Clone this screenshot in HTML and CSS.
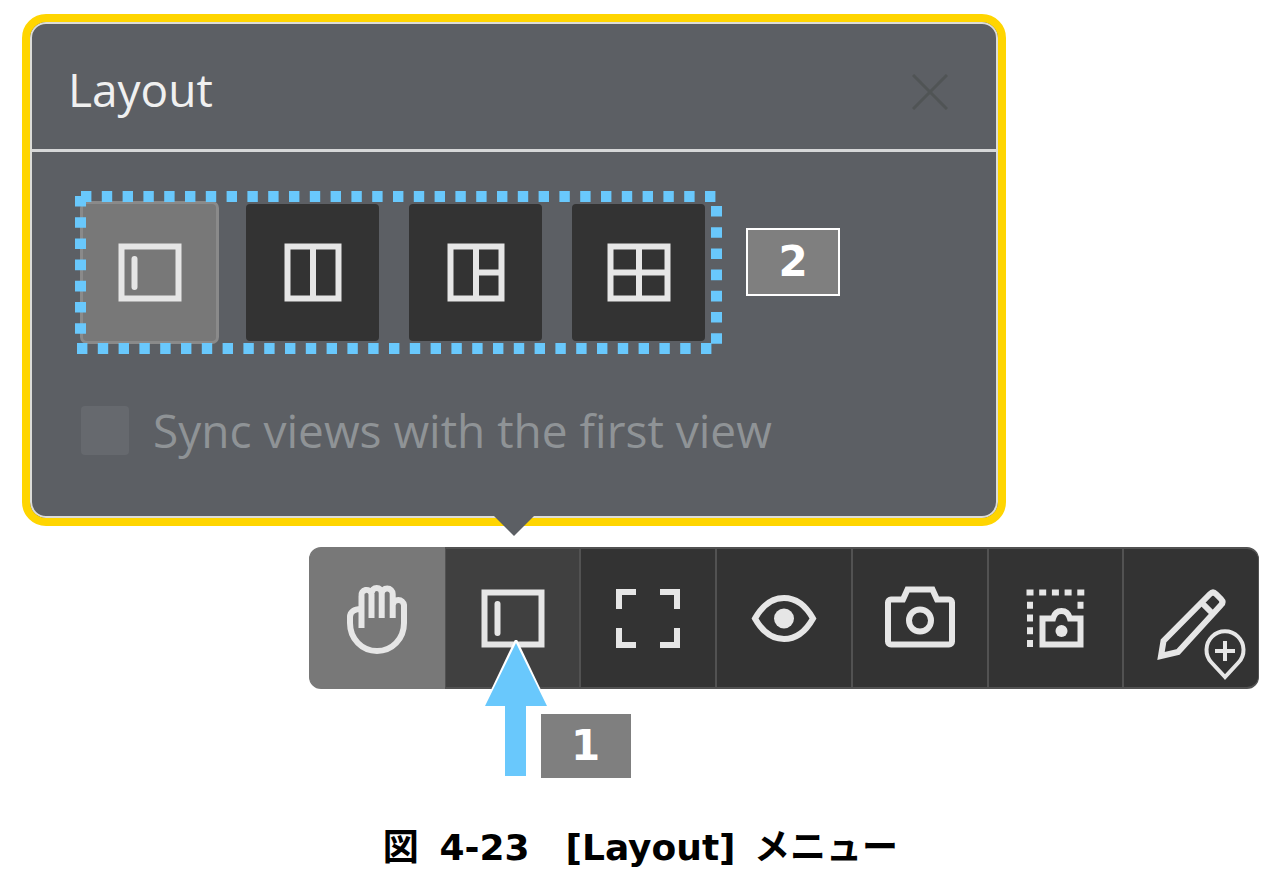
FILE: index.html
```html
<!DOCTYPE html>
<html lang="ja">
<head>
    <meta charset="UTF-8">
    <meta name="viewport" content="width=device-width, initial-scale=1.0">
    <title>[Layout] メニュー</title>
    <link rel="stylesheet" href="styles.css">
</head>
<body>
<figure class="figure">
    <section class="panel">
        <header class="panel-header">
            <h2 class="panel-title">Layout</h2>
            <button class="close" type="button" aria-label="Close">
                <svg width="36" height="36" viewBox="0 0 36 36"><path d="M1 1L35 35M35 1L1 35"/></svg>
            </button>
        </header>
        <div class="panel-body">
            <div class="layout-row">
                <div class="layouts">
                    <button class="tile active" type="button" aria-label="Single view">
                        <svg class="icon" viewBox="-60 -60 120 120"><path d="M-28.5 -26.5H28.5V25.5H-28.5Z"/><path class="bar" d="M-15.5 -14V14"/></svg>
                    </button>
                    <button class="tile" type="button" aria-label="Two views">
                        <svg class="icon" viewBox="-60 -60 120 120"><path d="M-25.5 -26.5H25.5V25.5H-25.5ZM0 -26V25"/></svg>
                    </button>
                    <button class="tile" type="button" aria-label="Three views">
                        <svg class="icon" viewBox="-60 -60 120 120"><path d="M-25.5 -26.5H25.5V25.5H-25.5ZM0 -26V25M0 -.5H25"/></svg>
                    </button>
                    <button class="tile" type="button" aria-label="Four views">
                        <svg class="icon" viewBox="-60 -60 120 120"><path d="M-28.5 -26.5H28.5V25.5H-28.5ZM0 -26V25M-28 -.5H28"/></svg>
                    </button>
                    <!-- dotted frame -->
                    <svg class="dots" width="647" height="163" viewBox="0 0 647 163">
                        <path stroke-dasharray="10.4 10.4" d="M6 5.5H641"/>
                        <path stroke-dasharray="10.4 10.4" d="M2 157.5H637"/>
                        <path stroke-dasharray="10.6 10.6" d="M5.5 5V153M641.5 15V153"/>
                    </svg>
                </div>
                <span class="callout outlined">2</span>
            </div>
            <label class="sync">
                <input type="checkbox" disabled>
                <span>Sync views with the first view</span>
            </label>
        </div>
    </section>

    <ul class="toolbar">
        <li>
            <button class="tool active" type="button" aria-label="Pan">
                <svg class="icon" viewBox="-60 -60 120 120"><path d="M-15.5 10V-22a5 5 0 0 1 10-2V0M-5.3 -25a5 5 0 0 1 10 0V0M4.7 -24a5.5 5.5 0 0 1 11 0V0M15.7 -13a5.7 5.7 0 0 1 11.3 0V5C27 21 15 33 0 33S-27 21-27 5V-1c0-5 4-8 11-8"/></svg>
            </button>
        </li>
        <li>
            <button class="tool open" type="button" aria-label="Layout">
                <svg class="icon" viewBox="-60 -60 120 120"><path d="M-28.5 -25.5H28.5V26.5H-28.5Z"/><path class="bar" d="M-15.5 -14V15"/></svg>
            </button>
            <div class="marker">
                <svg class="arrow" width="62" height="136" viewBox="0 0 62 136"><path class="edge" d="M0 66L31 1L62 66"/><path d="M31 3L62 66H41V136H20V66H0Z"/></svg>
                <span class="callout">1</span>
            </div>
        </li>
        <li>
            <button class="tool" type="button" aria-label="Fullscreen">
                <svg class="icon" viewBox="-60 -60 120 120"><path d="M-29 -9V-26H-12M12 -26H29V-9M29 10V27H12M-12 27H-29V10"/></svg>
            </button>
        </li>
        <li>
            <button class="tool" type="button" aria-label="Visibility">
                <svg class="icon" viewBox="-60 -60 120 120"><path d="M-29 .5C-22-12-12-20 0-20S22-12 29 .5C22 13 12 21 0 21S-22 13-29 .5Z"/><circle class="fill" cy=".5" r="10"/></svg>
            </button>
        </li>
        <li>
            <button class="tool" type="button" aria-label="Snapshot">
                <svg class="icon" viewBox="-60 -60 120 120"><path d="M-29 -18.5H-17L-12.5 -28.5H12.5L17 -18.5H29a3 3 0 0 1 3 3V23.5a3 3 0 0 1-3 3H-29a3 3 0 0 1-3-3V-15.5a3 3 0 0 1 3-3Z"/><circle cy="2.5" r="11"/></svg>
            </button>
        </li>
        <li>
            <button class="tool" type="button" aria-label="Snapshot of region">
                <svg class="icon" viewBox="-60 -60 120 120"><path stroke-dasharray="7 5.7" d="M-28.5 -25.5H30M-25 -16.2V30M25.5 -16.2V-9"/><path d="M-12.5 .5H-2Q0 -7 6.5 -7T15 .5H25.5V26.5H-12.5Z"/><circle class="fill" cx="6.5" cy="13" r="6"/></svg>
            </button>
        </li>
        <li>
            <button class="tool" type="button" aria-label="Add note">
                <svg class="icon" viewBox="-60 -60 120 120"><path d="M-30 38L-27.5 23L19 -24Q22 -27 25 -24L30 -19Q33 -16 30 -13L-13 34ZM11 -15L22 -4"/><path class="thin" d="M34 59L20.5 44.5A18.5 18.5 0 1 1 47.5 44.5ZM34 23V43M24 33H44"/></svg>
            </button>
        </li>
    </ul>

    <figcaption><span class="label">図</span> 4-23　[Layout] <span class="word">メニュー</span></figcaption>
</figure>
</body>
</html>
```
FILE: styles.css
```css
body {
    margin: 0;
    background-color: #fff;
    font-family: "Open Sans", "Noto Sans CJK JP", sans-serif;
}

.figure {
    display: grid;
    grid-template-columns: 287px 1fr 253px;
    row-gap: 21px;
    margin: 0;
    padding: 14px 19px 0 22px;
}

button {
    padding: 0;
    border: none;
    cursor: pointer;
}

/* panel */

.panel {
    grid-column: 1 / 3;
    position: relative;
    padding: 2px;
    background-color: #5c5f64;
    border: 8px solid #ffd500;
    border-radius: 24px;
    box-shadow: inset 0 0 0 2px #dcdcd8;
}

.panel::after {
    content: "";
    position: absolute;
    left: 464px;
    bottom: -18px;
    width: 40px;
    height: 20px;
    background-color: #5c5f64;
    clip-path: polygon(0 0, 100% 0, 50% 100%);
}

.panel-header {
    display: flex;
    align-items: center;
    justify-content: space-between;
    height: 125px;
    padding: 0 48px 0 36px;
    border-bottom: 3px solid #d6d7d8;
}

.panel-title {
    margin: 4px 0 0;
    color: #f0f0f0;
    font-size: 46px;
    font-weight: 500;
    line-height: 64px;
}

.close {
    display: flex;
    margin-top: 10px;
    background: none;
}

.close path {
    fill: none;
    stroke: #505455;
    stroke-width: 3;
}

.panel-body {
    padding: 39px 43px 61px;
}

.layout-row {
    display: flex;
    align-items: flex-start;
    gap: 24px;
}

.layouts {
    position: relative;
    display: flex;
    align-items: center;
    gap: 30px;
    height: 163px;
    padding: 0 17px 0 8px;
}

.tile {
    display: flex;
    align-items: center;
    justify-content: center;
    width: 133px;
    height: 137px;
    background-color: #333;
    border-radius: 4px;
}

.tile.active {
    background-color: #787878;
    box-shadow: 0 0 0 3px #8a8a8a;
}

.icon {
    flex: none;
    width: 120px;
    height: 120px;
    overflow: visible;
    fill: none;
    stroke: #e6e6e6;
    stroke-width: 6;
}

.icon .fill {
    fill: #e6e6e6;
    stroke: none;
}

.icon .bar {
    stroke-linecap: round;
}

.icon .thin {
    stroke-width: 4;
}

.dots {
    position: absolute;
    top: 0;
    left: 0;
    fill: none;
    stroke: #69c8fc;
    stroke-width: 11;
    pointer-events: none;
}

.callout {
    width: 90px;
    background-color: #7f7f7f;
    color: #fff;
    font-family: "DejaVu Sans", sans-serif;
    font-size: 42px;
    font-weight: 700;
    line-height: 64px;
    text-align: center;
}

.callout.outlined {
    margin-top: 37px;
    border: 2px solid #fff;
}

.sync {
    display: flex;
    align-items: center;
    gap: 24px;
    height: 49px;
    margin-top: 52px;
    padding-left: 6px;
    color: #8f9396;
    font-size: 46px;
    font-weight: 500;
    line-height: 49px;
}

.sync input {
    appearance: none;
    width: 48px;
    height: 49px;
    margin: 0;
    background-color: #66696e;
    border-radius: 4px;
}

/* toolbar */

.toolbar {
    grid-column: 2 / 4;
    display: flex;
    height: 142px;
    margin: 0;
    padding: 0;
    list-style: none;
}

.toolbar li {
    position: relative;
    flex: 1;
}

.tool {
    display: flex;
    align-items: center;
    justify-content: center;
    width: 100%;
    height: 100%;
    background-color: #333;
    border: solid #525252;
    border-width: 2px 1px;
}

.tool.active {
    background-color: #787878;
    border-color: #787878;
}

.tool.open {
    background-color: #404040;
}

.toolbar li:first-child .tool {
    border-radius: 12px 0 0 12px;
}

.toolbar li:last-child .tool {
    border-radius: 0 12px 12px 0;
}

.marker {
    position: absolute;
    top: 93px;
    left: 40px;
    z-index: 1;
    display: flex;
    align-items: flex-end;
}

.marker .callout {
    margin: 0 0 -2px -6px;
}

.arrow {
    fill: #69c8fc;
}

.arrow .edge {
    fill: none;
    stroke: #fff;
    stroke-width: 3;
}

figcaption {
    grid-column: 1 / 4;
    margin-top: 112px;
    font-family: "DejaVu Sans", "Noto Sans CJK JP", sans-serif;
    font-size: 36px;
    font-weight: 700;
    line-height: 52px;
    text-align: center;
}

figcaption .label {
    margin-right: 8px;
}

figcaption .word {
    margin-left: 6px;
}
```
